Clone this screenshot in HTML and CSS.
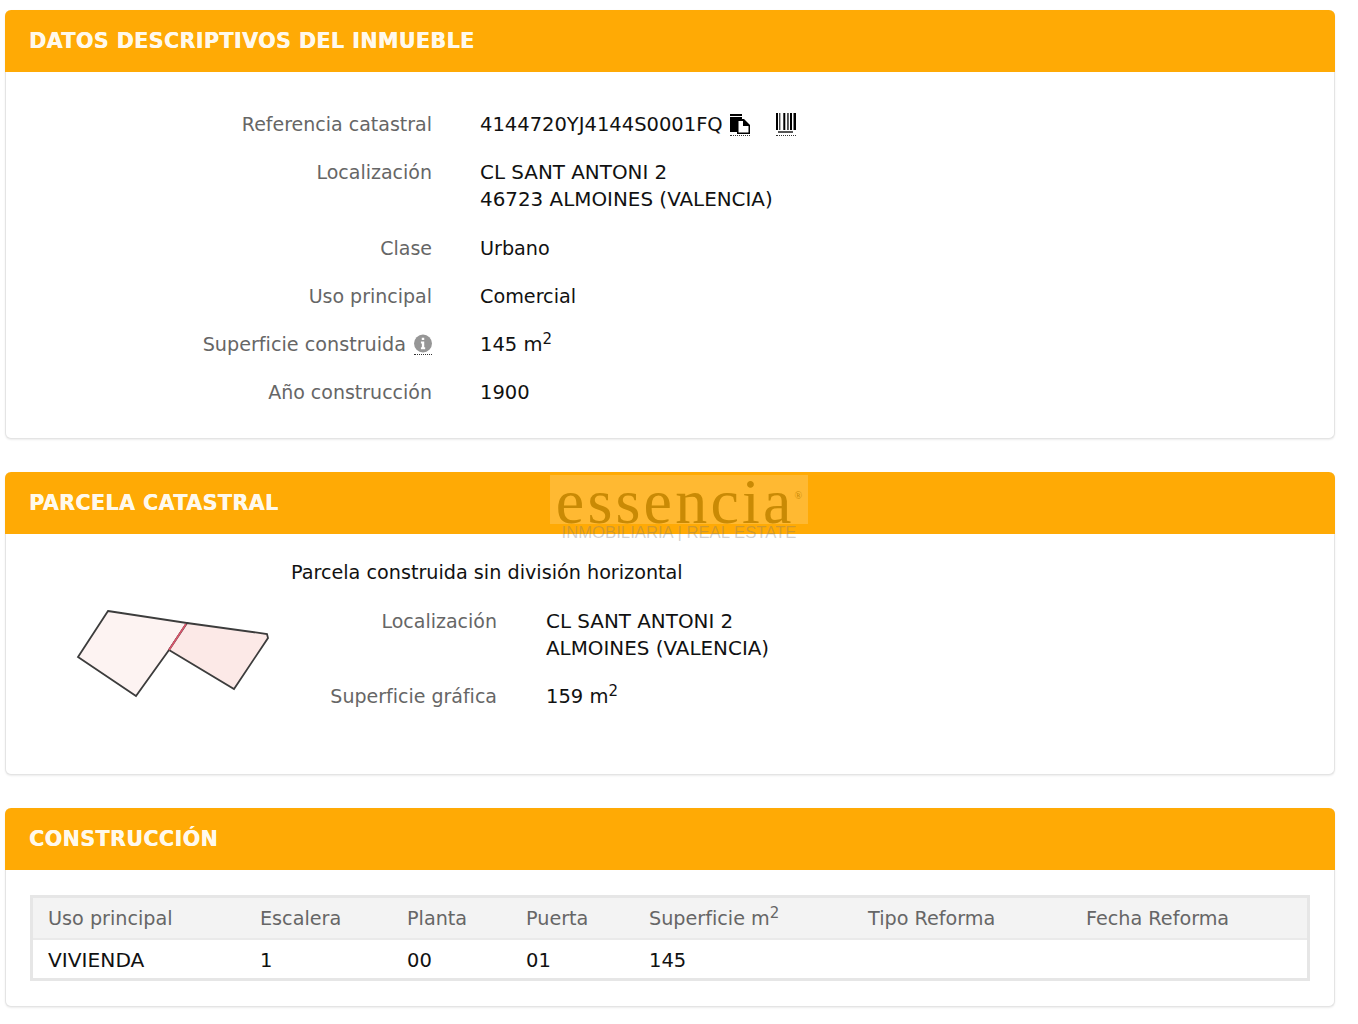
FILE: index.html
```html
<!DOCTYPE html>
<html lang="es">
<head>
    <meta charset="UTF-8">
    <title>Datos del inmueble</title>
    <link rel="stylesheet" href="styles.css">
</head>
<body>
    <div class="page">
        <!-- Datos descriptivos -->
        <section class="panel panel-datos">
            <h2 class="panel-title">DATOS DESCRIPTIVOS DEL INMUEBLE</h2>
            <dl class="fields">
                <dt>Referencia catastral</dt>
                <dd class="ref-line">
                    <span>4144720YJ4144S0001FQ</span>
                    <span class="icon-link icon-copy">
                        <svg width="20" height="20" viewBox="0 0 20 20">
                            <path d="M0 0h12v2H0z M0 3h12v15H0z" fill="#000"/>
                            <path d="M7 5h7l6 6v9H7z" fill="#000"/>
                            <path d="M8.500 7h4.500v5h5.500v6.500h-10z" fill="#fff"/>
                        </svg>
                    </span>
                    <span class="icon-link icon-barcode">
                        <svg width="20" height="21" viewBox="0 0 20 21">
                            <path d="M0 0h2v17H0z M3.300 0h1v17h-1z M7.300 0h2v17h-2z M11.300 0h1.300v17h-1.300z M14 0h2v17h-2z M17.500 0h2.500v17h-2.500z" fill="#000"/>
                            <path d="M2 18h15v2H2z" fill="#555"/>
                        </svg>
                    </span>
                </dd>

                <dt>Localización</dt>
                <dd class="caps">CL SANT ANTONI 2<br>46723 ALMOINES (VALENCIA)</dd>

                <dt>Clase</dt>
                <dd class="word">Urbano</dd>

                <dt>Uso principal</dt>
                <dd class="word">Comercial</dd>

                <dt class="with-info">Superficie construida
                    <span class="icon-link icon-info">
                        <svg width="18" height="19" viewBox="0 0 19 20">
                            <circle cx="9.500" cy="10" r="9.500" fill="#969696"/>
                            <path d="M8.200 3.800h2.600v2.600H8.200z M7.300 8h3.500v6h1v2H7.300v-2h1v-4h-1z" fill="#fff"/>
                        </svg>
                    </span>
                </dt>
                <dd>145 m<sup>2</sup></dd>

                <dt>Año construcción</dt>
                <dd>1900</dd>
            </dl>
        </section>

        <!-- Parcela -->
        <section class="panel panel-parcela">
            <h2 class="panel-title">PARCELA CATASTRAL</h2>
            <div class="parcela-body">
                <svg class="parcela-map" width="200" height="90" viewBox="0 0 200 90">
                    <path d="M33 3L112 15L94 42L61 88L3 49Z" fill="#fdf3f2" stroke="#3c3c3c" stroke-width="1.800"/>
                    <path d="M112 15L192 26L193 30L159 81L94 42Z" fill="#fce9e7" stroke="#3c3c3c" stroke-width="1.800"/>
                    <path d="M111 16L94 42" fill="none" stroke="#d8556b" stroke-width="1.800"/>
                </svg>
                <div class="parcela-info">
                    <p class="parcela-note">Parcela construida sin división horizontal</p>
                    <dl class="fields fields-small">
                        <dt>Localización</dt>
                        <dd class="caps">CL SANT ANTONI 2<br>ALMOINES (VALENCIA)</dd>

                        <dt>Superficie gráfica</dt>
                        <dd>159 m<sup>2</sup></dd>
                    </dl>
                </div>
            </div>
        </section>

        <!-- Construccion -->
        <section class="panel panel-construccion">
            <h2 class="panel-title">CONSTRUCCIÓN</h2>
            <div class="table-wrap">
                <table class="tabla">
                    <thead>
                        <tr>
                            <th>Uso principal</th>
                            <th>Escalera</th>
                            <th>Planta</th>
                            <th>Puerta</th>
                            <th>Superficie m<sup>2</sup></th>
                            <th>Tipo Reforma</th>
                            <th>Fecha Reforma</th>
                        </tr>
                    </thead>
                    <tbody>
                        <tr>
                            <td class="caps">VIVIENDA</td>
                            <td>1</td>
                            <td>00</td>
                            <td>01</td>
                            <td>145</td>
                            <td></td>
                            <td></td>
                        </tr>
                    </tbody>
                </table>
            </div>
        </section>

        <!-- Marca de agua -->
        <div class="watermark">
            <div class="watermark-logo">essencia<span class="watermark-reg">®</span></div>
            <div class="watermark-sub">INMOBILIARIA | REAL ESTATE</div>
        </div>
    </div>
</body>
</html>
```

FILE: styles.css
```css
/* Estilos generales */
body {
    font-family: "DejaVu Sans", Verdana, sans-serif;
    font-size: 19.5px;
    line-height: 27.5px;
    background-color: #fff;
    color: #111;
    margin: 0;
}

.page {
    position: relative;
    width: 1330px;
    margin-left: 5px;
    padding-top: 10px;
}

.panel {
    background-color: #fff;
    border: 1px solid #e4e4e4;
    border-top: none;
    border-radius: 6px;
    box-shadow: 0 1px 2px rgba(0, 0, 0, 0.08);
    margin-bottom: 33px;
    box-sizing: border-box;
}

.panel-datos {
    height: 429px;
}

.panel-parcela {
    height: 303px;
}

.panel-construccion {
    height: 199px;
}

.panel-title {
    background-color: #ffaa05;
    color: #fff9ec;
    font-size: 20.5px;
    font-weight: bold;
    letter-spacing: 0.5px;
    text-shadow: 0.4px 0 0 #fff9ec;
    line-height: 61px;
    margin: 0 -1px;
    padding: 1px 0 0 24px;
    border-radius: 6px 6px 0 0;
}

/* Filas de datos */
.fields {
    display: grid;
    grid-template-columns: 426px 1fr;
    column-gap: 48px;
    row-gap: 20.5px;
    margin: 0;
    padding-top: 39px;
}

.fields dt {
    color: #666;
    font-size: 19px;
    text-align: right;
}

.fields dd {
    margin: 0;
}

.fields sup,
.tabla sup {
    font-size: 15px;
    line-height: 0;
}

.fields .caps {
    font-size: 19.9px;
    line-height: 27px;
    padding-bottom: 1px;
}

.fields .word {
    font-size: 19.2px;
}

.ref-line {
    display: flex;
    align-items: center;
}

.fields .with-info {
    display: flex;
    justify-content: flex-end;
    align-items: center;
    gap: 8px;
    font-size: 19.2px;
}

.icon-link {
    display: flex;
    border-bottom: 1px dotted #333;
    padding-bottom: 1px;
}

.icon-copy {
    margin-left: 7px;
}

.icon-barcode {
    margin-left: 26px;
}

/* Parcela */
.parcela-body {
    display: flex;
}

.parcela-map {
    flex: none;
    margin: 74px 0 0 69px;
}

.parcela-info {
    margin-left: 16px;
    padding-top: 25px;
}

.parcela-note {
    margin: 0;
    font-size: 19.2px;
}

.fields-small {
    grid-template-columns: 206px 1fr;
    column-gap: 49px;
    padding-top: 21px;
}

/* Tabla */
.table-wrap {
    padding: 25px 24px 0;
}

.tabla {
    width: 1280px;
    table-layout: fixed;
    border-collapse: collapse;
    border: 3px solid #e6e6e6;
}

.tabla th,
.tabla td {
    text-align: left;
    font-weight: normal;
    height: 27px;
    box-sizing: content-box;
}

.tabla th {
    background-color: #f3f3f3;
    color: #666;
    font-size: 19.2px;
    padding: 7px 0 5px 15px;
    border-bottom: 2px solid #eaeaea;
}

.tabla td {
    padding: 7px 0 4px 15px;
}

.tabla .caps {
    font-size: 20.2px;
}

.tabla th:nth-child(1) { width: 197px; }
.tabla th:nth-child(2) { width: 132px; }
.tabla th:nth-child(3) { width: 104px; }
.tabla th:nth-child(4) { width: 108px; }
.tabla th:nth-child(5) { width: 204px; }
.tabla th:nth-child(6) { width: 203px; }

/* Marca de agua */
.watermark {
    position: absolute;
    left: 545px;
    top: 475px;
    width: 258px;
}

.watermark-logo {
    background-color: rgba(255, 255, 255, 0.18);
    color: #c98a05;
    font-family: "Liberation Serif", serif;
    font-size: 64px;
    letter-spacing: 3.200px;
    line-height: 41px;
    height: 49px;
    text-align: center;
    white-space: nowrap;
}

.watermark-reg {
    font-size: 10px;
    vertical-align: 24px;
    letter-spacing: 0;
}

.watermark-sub {
    color: rgba(120, 120, 120, 0.35);
    font-family: "Liberation Sans", sans-serif;
    font-size: 16.7px;
    line-height: 18px;
    text-align: center;
    white-space: nowrap;
}
```
